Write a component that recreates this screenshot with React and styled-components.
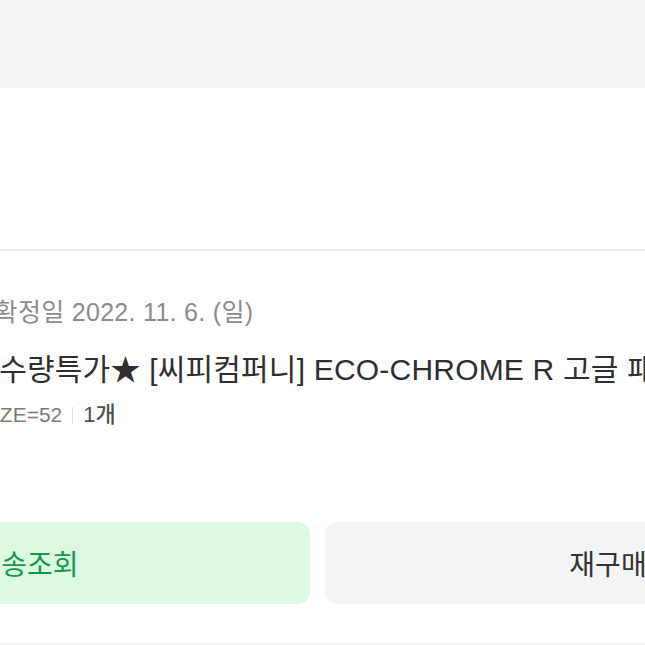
import React from 'react';
import styled, { createGlobalStyle } from 'styled-components';

const GlobalStyle = createGlobalStyle`
  html, body {
    margin: 0;
    padding: 0;
    background: #ffffff;
    overflow: hidden;
  }
  body {
    font-family: "Liberation Sans", "Noto Sans CJK KR", sans-serif;
  }
`;

const Page = styled.div`
  width: 645px;
  height: 645px;
  overflow: hidden;
  background: #ffffff;
`;

const TopBand = styled.div`
  height: 88px;
  background: #f4f5f7;
`;

const Blank = styled.div`
  height: 161px;
  background: #ffffff;
`;

const Divider = styled.div`
  height: 2px;
  background: #ececec;
`;

const OrderCard = styled.section`
  padding-top: 46px;
  display: flex;
  flex-direction: column;
  border-bottom: 2px solid #f2f2f2;
  padding-bottom: 39px;
`;

const Info = styled.div`
  display: flex;
  flex-direction: column;
  white-space: nowrap;
`;

const DateLine = styled.div`
  margin-left: ${(p) => p.$shift}px;
  font-size: 25px;
  line-height: 30px;
  letter-spacing: 0.3px;
  color: #8b8b8b;
`;

const Title = styled.div`
  margin-top: 26px;
  margin-left: ${(p) => p.$shift}px;
  font-size: 30px;
  line-height: 34px;
  letter-spacing: 0.2px;
  color: #2e2e2e;
`;

const OptionLine = styled.div`
  margin-top: 13px;
  margin-left: ${(p) => p.$shift}px;
  display: flex;
  align-items: center;
  font-size: 21px;
  line-height: 30px;
  color: #7a7a7a;
`;

const Sep = styled.span`
  width: 1px;
  height: 17px;
  margin: 0 10px;
  background: #dedede;
`;

const Qty = styled.span`
  color: #505050;
  font-weight: 500;
  font-size: 22px;
`;

const Buttons = styled.div`
  margin-top: 92px;
  margin-left: -256px;
  display: flex;
  gap: 15px;
`;

const ActionButton = styled.button`
  flex: 0 0 566px;
  height: 82px;
  border: 0;
  border-radius: 12px;
  font-family: "Liberation Sans", "Noto Sans CJK KR", sans-serif;
  font-size: 28px;
  background: ${(p) => (p.$kind === 'green' ? '#dcf8e3' : '#f2f4f6')};
  color: ${(p) => (p.$kind === 'green' ? '#13984a' : '#333333')};
`;

export default function App() {
  return (
    <Page>
      <GlobalStyle />
      <TopBand />
      <Blank />
      <Divider />
      <OrderCard>
        <Info>
          <DateLine $shift={-52}>구매확정일 2022. 11. 6. (일)</DateLine>
          <Title $shift={-31}>★수량특가★ [씨피컴퍼니] ECO-CHROME R 고글 패키지</Title>
          <OptionLine $shift={-20}>
            SIZE=52
            <Sep />
            <Qty>1개</Qty>
          </OptionLine>
        </Info>
        <Buttons>
          <ActionButton $kind="green">배송조회</ActionButton>
          <ActionButton>재구매</ActionButton>
        </Buttons>
      </OrderCard>
    </Page>
  );
}
